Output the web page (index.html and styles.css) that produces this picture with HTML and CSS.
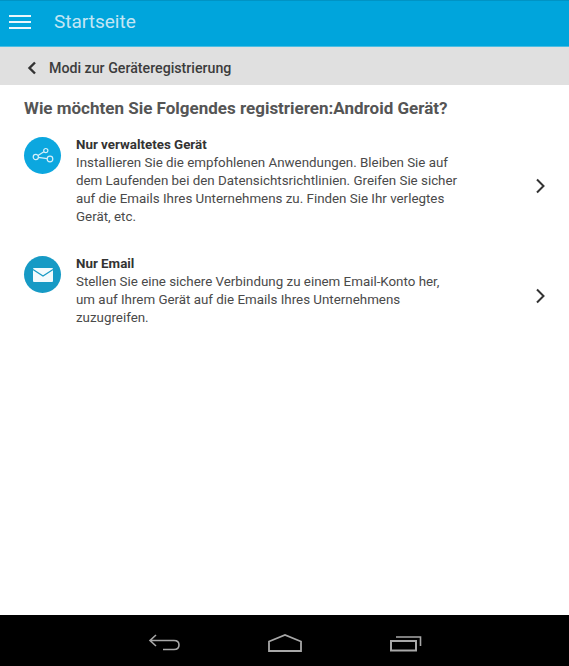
FILE: index.html
```html
<!DOCTYPE html>
<html lang="de">
<head>
<meta charset="utf-8">
<title>Startseite</title>
<link rel="stylesheet" href="styles.css">
</head>
<body>
<div class="screen">
  <header class="appbar">
    <svg class="menu" width="22" height="14" viewBox="0 0 22 14"><path d="M0 1h22M0 7h22M0 13h22" stroke="#eaf6fb" stroke-width="2" fill="none"/></svg>
    <span class="appbar-title">Startseite</span>
  </header>
  <nav class="crumb">
    <svg class="crumb-back" width="10" height="14" viewBox="0 0 10 14"><path d="M8 1.500 2.500 7 8 12.500" stroke="#333" stroke-width="2.400" fill="none"/></svg>
    <span class="crumb-label">Modi zur Geräteregistrierung</span>
  </nav>
  <main class="content">
    <h1 class="heading">Wie möchten Sie Folgendes registrieren:Android Gerät?</h1>
    <section class="option option-first">
      <span class="badge badge-share">
        <svg width="22" height="18" viewBox="0 0 22 18"><g fill="none" stroke="#d6f0fa" stroke-width="1.200"><circle cx="3.800" cy="10" r="2.600"/><circle cx="13.800" cy="3.600" r="2.100"/><circle cx="18" cy="12" r="2.800"/><path d="M6 8.600 11.900 4.800M6.400 10.400 15.200 11.600"/></g></svg>
      </span>
      <div class="option-text">
        <div class="option-title">Nur verwaltetes Gerät</div>
        <div class="option-desc">Installieren Sie die empfohlenen Anwendungen. Bleiben Sie auf<br>dem Laufenden bei den Datensichtsrichtlinien. Greifen Sie sicher<br>auf die Emails Ihres Unternehmens zu. Finden Sie Ihr verlegtes<br>Gerät, etc.</div>
      </div>
      <svg class="chevron" width="12" height="16" viewBox="0 0 12 16"><path d="M2 1.500 8.500 8 2 14.500" stroke="#333" stroke-width="2" fill="none"/></svg>
    </section>
    <section class="option option-second">
      <span class="badge badge-mail">
        <svg width="20" height="14" viewBox="0 0 20 14"><rect width="20" height="14" rx="1" fill="#f2fafd"/><path d="M0 1.500 10 8 20 1.500" stroke="#169ac5" stroke-width="1.200" fill="none"/></svg>
      </span>
      <div class="option-text">
        <div class="option-title">Nur Email</div>
        <div class="option-desc">Stellen Sie eine sichere Verbindung zu einem Email-Konto her,<br>um auf Ihrem Gerät auf die Emails Ihres Unternehmens<br>zuzugreifen.</div>
      </div>
      <svg class="chevron" width="12" height="16" viewBox="0 0 12 16"><path d="M2 1.500 8.500 8 2 14.500" stroke="#333" stroke-width="2" fill="none"/></svg>
    </section>
  </main>
  <footer class="sysbar">
    <svg width="32" height="18" viewBox="0 0 32 18"><path d="M8 1 2 6.500 8 12M2 6.500H26Q31 6.500 31 11T26 15.500H15" stroke="#a8a8a8" stroke-width="1.600" fill="none"/></svg>
    <svg class="sys-home" width="34" height="18" viewBox="0 0 34 18"><path d="M1 7.500 17 1 33 7.500V17H1Z" stroke="#a8a8a8" stroke-width="1.800" fill="none"/></svg>
    <svg width="32" height="18" viewBox="0 0 32 18"><path d="M1 7h25v9.500H1Z" stroke="#a8a8a8" stroke-width="2" fill="none"/><path d="M6 3H30.500V12" stroke="#a8a8a8" stroke-width="1.600" fill="none"/></svg>
  </footer>
</div>
</body>
</html>
```
FILE: styles.css
```css
* { box-sizing: border-box; }
html, body { margin: 0; padding: 0; }
body { font-family: Roboto, "Liberation Sans", sans-serif; background: #fff; }
.screen { width: 569px; height: 666px; display: flex; flex-direction: column; overflow: hidden; }
.appbar { height: 47px; flex: none; background: #00a5dc; border-top: 1px solid #0093c4; border-bottom: 1px solid #4bbde2; display: flex; align-items: center; padding: 0 0 4px 9px; }
.menu { display: block; }
.appbar-title { margin-left: 23px; font-size: 19px; color: #c4e6f4; }
.crumb { height: 38px; flex: none; background: #e0e0e0; display: flex; align-items: center; padding: 4px 0 0 27px; }
.crumb-back { display: block; }
.crumb-label { margin-left: 12px; font-size: 14.2px; font-weight: 500; color: #3c3c3c; }
.content { flex: 1; padding: 0 24px; }
.heading { margin: 13px 0 0; font-size: 17px; line-height: 20px; font-weight: 700; color: #555; }
.option { display: flex; position: relative; align-items: flex-start; }
.option-first { margin-top: 17px; }
.option-second { margin-top: 28px; }
.badge { width: 37px; height: 37px; flex: none; border-radius: 50%; display: flex; align-items: center; justify-content: center; margin-top: 2px; }
.badge-share { background: #0ca7df; }
.badge-mail { background: #169ac5; }
.option-text { margin: 1px 0 0 15px; width: 400px; font-size: 13.35px; line-height: 18px; }
.option-title { font-weight: 700; color: #333; }
.option-desc { color: #4a4a4a; white-space: nowrap; }
.chevron { position: absolute; left: 511px; top: 50%; margin-top: -2.5px; }
.sysbar { height: 51px; flex: none; background: #000; display: flex; align-items: center; gap: 88px; padding: 4px 0 0 148px; }
```
